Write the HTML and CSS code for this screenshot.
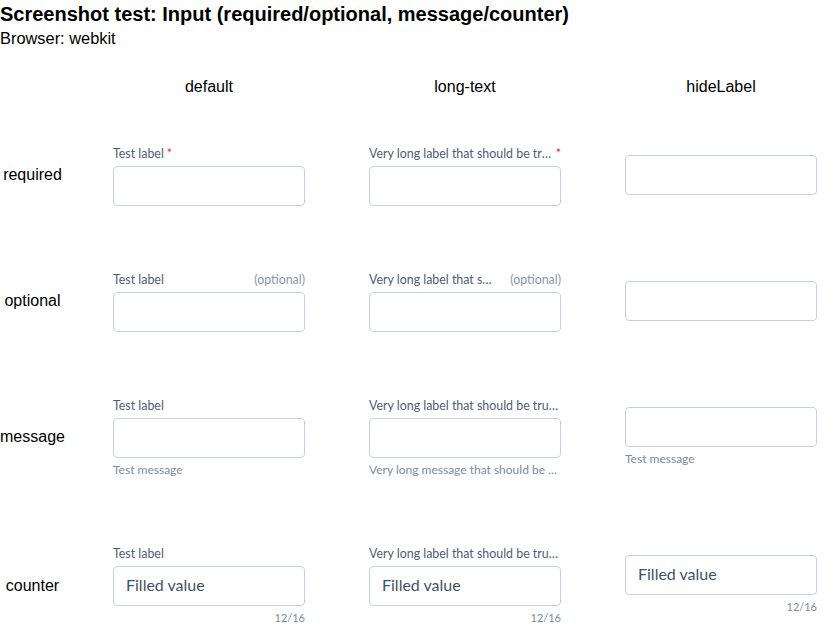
FILE: index.html
```html
<!DOCTYPE html>
<html lang="en">
<head>
<meta charset="utf-8">
<title>Screenshot test: Input</title>
<link rel="stylesheet" href="styles.css">
</head>
<body>
<h1 class="title">Screenshot test: Input (required/optional, message/counter)</h1>
<p class="subtitle">Browser: webkit</p>
<div class="matrix">
  <div class="corner"></div>
  <div class="col-head">default</div>
  <div class="col-head">long-text</div>
  <div class="col-head">hideLabel</div>

  <div class="row-head">required</div>
  <div class="cell">
    <div class="field">
      <div class="field-label"><span class="label-text">Test label</span><span class="req">*</span></div>
      <input class="input" type="text">
    </div>
  </div>
  <div class="cell">
    <div class="field">
      <div class="field-label"><span class="label-text">Very long label that should be truncated</span><span class="req">*</span></div>
      <input class="input" type="text">
    </div>
  </div>
  <div class="cell">
    <div class="field">
      <input class="input" type="text">
    </div>
  </div>

  <div class="row-head">optional</div>
  <div class="cell">
    <div class="field">
      <div class="field-label"><span class="label-text grow">Test label</span><span class="opt">(optional)</span></div>
      <input class="input" type="text">
    </div>
  </div>
  <div class="cell">
    <div class="field">
      <div class="field-label"><span class="label-text grow">Very long label that should be truncated</span><span class="opt">(optional)</span></div>
      <input class="input" type="text">
    </div>
  </div>
  <div class="cell">
    <div class="field">
      <input class="input" type="text">
    </div>
  </div>

  <div class="row-head">message</div>
  <div class="cell">
    <div class="field">
      <div class="field-label"><span class="label-text">Test label</span></div>
      <input class="input" type="text">
      <div class="message">Test message</div>
    </div>
  </div>
  <div class="cell">
    <div class="field">
      <div class="field-label"><span class="label-text">Very long label that should be truncated</span></div>
      <input class="input" type="text">
      <div class="message">Very long message that should be truncated</div>
    </div>
  </div>
  <div class="cell">
    <div class="field">
      <input class="input" type="text">
      <div class="message">Test message</div>
    </div>
  </div>

  <div class="row-head">counter</div>
  <div class="cell row-last">
    <div class="field">
      <div class="field-label"><span class="label-text">Test label</span></div>
      <input class="input" type="text" value="Filled value">
      <div class="counter">12/16</div>
    </div>
  </div>
  <div class="cell row-last">
    <div class="field">
      <div class="field-label"><span class="label-text">Very long label that should be truncated</span></div>
      <input class="input" type="text" value="Filled value">
      <div class="counter">12/16</div>
    </div>
  </div>
  <div class="cell row-last">
    <div class="field">
      <input class="input" type="text" value="Filled value">
      <div class="counter">12/16</div>
    </div>
  </div>
</div>
</body>
</html>
```

FILE: styles.css
```css
html, body {
  margin: 0;
  padding: 0;
  background: #ffffff;
}

body {
  font-family: "Liberation Sans", Arial, sans-serif;
  color: #000000;
}

.title {
  margin: 0;
  font-size: 20px;
  line-height: 29px;
  font-weight: bold;
}

.subtitle {
  margin: 0;
  font-size: 16.4px;
  line-height: 18px;
}

.matrix {
  display: grid;
  grid-template-columns: 81px 256px 256px 224px;
  align-items: center;
}

.col-head {
  width: 192px;
  padding: 31px 0 16px 32px;
  font-size: 16px;
  line-height: 18px;
  text-align: center;
}

.row-head {
  padding-right: 16px;
  font-size: 16px;
  line-height: 18px;
  text-align: center;
}

.cell {
  padding: 32px 0 32px 32px;
}

.cell.row-last {
  padding-top: 34px;
  padding-bottom: 36px;
}

.field {
  width: 192px;
  display: flex;
  flex-direction: column;
  font-family: "Lato", "Noto Sans", sans-serif;
}

.field-label {
  display: flex;
  align-items: baseline;
  height: 16px;
  padding-top: 2px;
  margin-bottom: 4px;
  font-size: 12.4px;
  line-height: 16px;
  color: #4c6075;
}

.label-text {
  min-width: 0;
  overflow: hidden;
  white-space: nowrap;
  text-overflow: ellipsis;
}

.label-text.grow {
  flex: 1 1 auto;
}

.req {
  flex: none;
  margin-left: 3px;
  color: #e0343a;
}

.opt {
  flex: none;
  margin-left: 12px;
  color: #8797a8;
}

.input {
  box-sizing: border-box;
  width: 192px;
  height: 40px;
  margin: 0;
  padding: 0 12px 3px;
  border: 1px solid #c6d1dc;
  border-radius: 4px;
  background: #ffffff;
  font-family: "Lato", "Noto Sans", sans-serif;
  font-size: 16px;
  color: #3e5367;
  outline: none;
}

.message,
.counter {
  margin-top: 4px;
  font-size: 12px;
  line-height: 16px;
  color: #778da4;
  white-space: nowrap;
  overflow: hidden;
  text-overflow: ellipsis;
}

.counter {
  font-size: 11px;
  text-align: right;
}
```
